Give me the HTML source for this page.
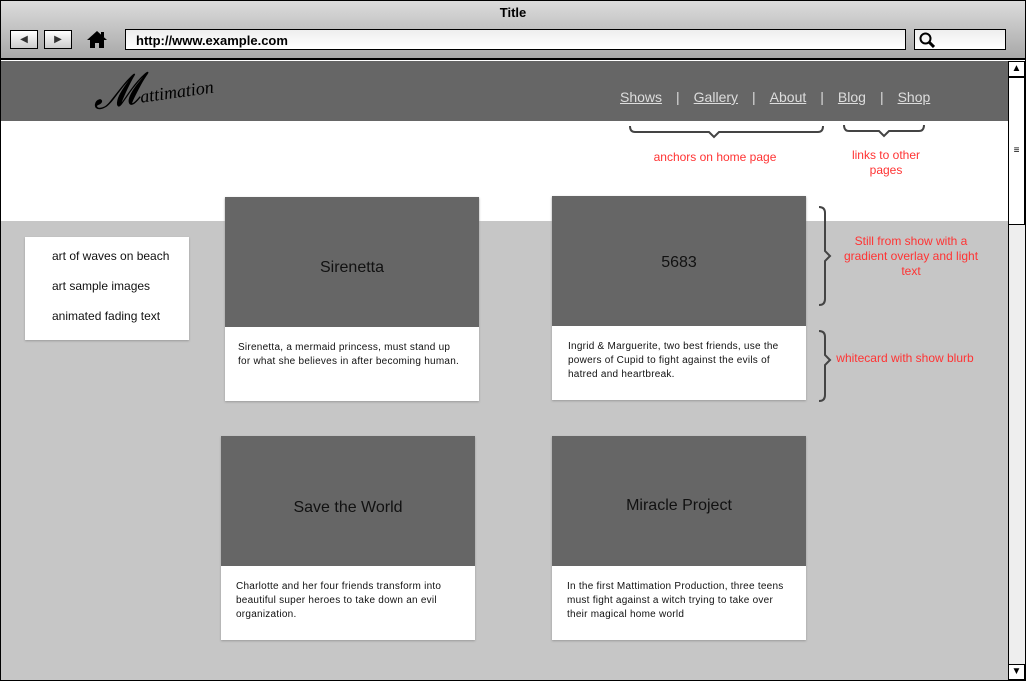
<!DOCTYPE html><html><head><style>
*{margin:0;padding:0;box-sizing:border-box}
body{width:1026px;height:681px;overflow:hidden;font-family:"Liberation Sans",sans-serif;background:#fff;position:relative}
.a{position:absolute}
.chrome{left:0;top:0;width:1026px;height:60px;background:linear-gradient(#dcdcdc,#a8a8a8);border:1px solid #000;border-bottom:2px solid #000}
.btn{top:30px;width:28px;height:19px;border:1px solid #000;background:linear-gradient(#fff,#ccc);font-size:10px;text-align:center;line-height:17px;color:#333}
.url{top:29px;height:21px;border:1px solid #000;background:linear-gradient(#eee,#fff);font-size:13px;font-weight:bold;padding:3px 10px}
.card{background:#fff;box-shadow:0 1px 2px #999}
.img{background:#666;color:#111;font-size:16px;display:flex;align-items:center;justify-content:center;padding-top:12px}
.txt{font-size:10px;line-height:14px;color:#111;padding:14px 12px 0 13px;letter-spacing:0.25px}
.nav a{color:#ddd;text-decoration:underline;font-size:14px}
.nav span{color:#ddd;font-size:14px;margin:0 14px}
.red{color:#f33;font-size:12px;text-align:center;line-height:15px}
</style></head><body>
<div class="a chrome"></div>
<div class="a" style="left:0;top:5px;width:1026px;text-align:center;font-size:13px;font-weight:bold">Title</div>
<div class="a btn" style="left:10px">◀</div>
<div class="a btn" style="left:44px">▶</div>
<svg class="a" style="left:86px;top:30px" width="22" height="19" viewBox="0 0 22 19"><path d="M11 1L1 10h3v8h5v-5h4v5h5v-8h3z" fill="#000"/><rect x="15" y="2" width="3" height="5" fill="#000"/></svg>
<div class="a url" style="left:125px;width:781px">http://www.example.com</div>
<div class="a url" style="left:914px;width:92px;padding:2px 4px"><svg width="16" height="16"><circle cx="6.5" cy="6.5" r="5" stroke="#000" stroke-width="2" fill="none"/><path d="M10 10l5 5" stroke="#000" stroke-width="3"/></svg></div>
<div class="a" style="left:0;top:61px;width:1008px;height:60px;background:#666"></div>
<div class="a" style="left:92px;top:64px;font-family:'Liberation Serif',serif;font-style:italic;font-size:42px;color:#000;transform:rotate(-8deg)">𝓜<span style="font-size:18px">attimation</span></div>
<div class="a nav" style="left:620px;top:89px"><a>Shows</a><span>|</span><a>Gallery</a><span>|</span><a>About</a><span>|</span><a>Blog</a><span>|</span><a>Shop</a></div>
<svg class="a" style="left:628px;top:124px" width="305" height="20"><path d="M2 2q0 6 5 6h74l5 5 5-5h99q5 0 5-6M216 1q0 6 5 6h30l5 5 5-5h30q5 0 5-6" stroke="#444" stroke-width="2" fill="none"/></svg>
<div class="a red" style="left:640px;top:150px;width:150px">anchors on home page</div>
<div class="a red" style="left:836px;top:148px;width:100px">links to other pages</div>
<div class="a" style="left:0;top:221px;width:1008px;height:459px;background:#c6c6c6"></div>
<div class="a card" style="left:25px;top:237px;width:164px;height:103px;font-size:12px;color:#111;line-height:30px;padding:4px 0 0 27px">art of waves on beach<br>art sample images<br>animated fading text</div>
<div class="a card" style="left:225px;top:197px;width:254px;height:204px"><div class="img" style="height:130px">Sirenetta</div><div class="txt" style="padding-right:8px">Sirenetta, a mermaid princess, must stand up<br>for what she believes in after becoming human.</div></div>
<div class="a card" style="left:552px;top:196px;width:254px;height:204px"><div class="img" style="height:130px;padding-top:4px">5683</div><div class="txt" style="padding-top:14px;padding-left:16px">Ingrid &amp; Marguerite, two best friends, use the powers of Cupid to fight against the evils of hatred and heartbreak.</div></div>
<div class="a card" style="left:221px;top:436px;width:254px;height:204px"><div class="img" style="height:130px;padding-top:14px">Save the World</div><div class="txt" style="padding-left:15px">Charlotte and her four friends transform into beautiful super heroes to take down an evil organization.</div></div>
<div class="a card" style="left:552px;top:436px;width:254px;height:204px"><div class="img" style="height:130px;padding-top:10px">Miracle Project</div><div class="txt" style="padding-left:15px;padding-right:16px">In the first Mattimation Production, three teens must fight against a witch trying to take over their magical home world</div></div>
<svg class="a" style="left:812px;top:205px" width="25" height="200"><path d="M7 2q6 0 6 6v38l5 5-5 5v38q0 6-6 6M7 126q6 0 6 6v18l5 5-5 5v30q0 6-6 6" stroke="#444" stroke-width="2" fill="none"/></svg>
<div class="a red" style="left:838px;top:234px;width:146px">Still from show with a gradient overlay and light text</div>
<div class="a red" style="left:830px;top:351px;width:150px">whitecard with show blurb</div>
<div class="a" style="left:1008px;top:61px;width:17px;height:619px;background:#eee;border-left:1px solid #000"></div>
<div class="a" style="left:1008px;top:61px;width:17px;height:16px;background:#fff;border:1px solid #000;font-size:10px;text-align:center;line-height:14px">▲</div>
<div class="a" style="left:1008px;top:77px;width:17px;height:148px;background:#fff;border:1px solid #000;font-size:10px;text-align:center;line-height:146px">≡</div>
<div class="a" style="left:1008px;top:664px;width:17px;height:16px;background:#fff;border:1px solid #000;font-size:10px;text-align:center;line-height:14px">▼</div>
<div class="a" style="left:0;top:0;width:1026px;height:681px;border:1px solid #000;pointer-events:none"></div>
</body></html>
